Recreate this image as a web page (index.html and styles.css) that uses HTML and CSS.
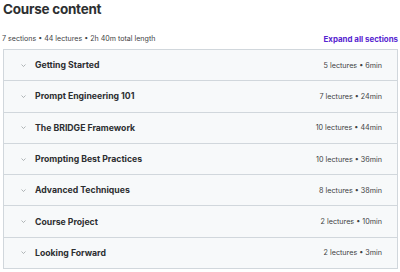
FILE: index.html
```html
<!DOCTYPE html>
<html lang="en">
<head>
    <meta charset="UTF-8">
    <title>Course content</title>
    <link rel="stylesheet" href="styles.css">
</head>
<body>
    <div class="curriculum">
        <h2 class="title">Course content</h2>
        <div class="summary">
            <span>7 sections • 44 lectures • 2h 40m total length</span>
            <a href="#" class="expand-all">Expand all sections</a>
        </div>
        <div class="sections">
            <div class="section">
                <svg class="chevron" viewBox="0 0 10 6"><path d="M1 1l4 4 4-4"/></svg>
                <span class="name">Getting Started</span>
                <span class="meta">5 lectures • 6min</span>
            </div>
            <div class="section">
                <svg class="chevron" viewBox="0 0 10 6"><path d="M1 1l4 4 4-4"/></svg>
                <span class="name">Prompt Engineering 101</span>
                <span class="meta">7 lectures • 24min</span>
            </div>
            <div class="section">
                <svg class="chevron" viewBox="0 0 10 6"><path d="M1 1l4 4 4-4"/></svg>
                <span class="name">The BRIDGE Framework</span>
                <span class="meta">10 lectures • 44min</span>
            </div>
            <div class="section">
                <svg class="chevron" viewBox="0 0 10 6"><path d="M1 1l4 4 4-4"/></svg>
                <span class="name">Prompting Best Practices</span>
                <span class="meta">10 lectures • 36min</span>
            </div>
            <div class="section">
                <svg class="chevron" viewBox="0 0 10 6"><path d="M1 1l4 4 4-4"/></svg>
                <span class="name">Advanced Techniques</span>
                <span class="meta">8 lectures • 38min</span>
            </div>
            <div class="section">
                <svg class="chevron" viewBox="0 0 10 6"><path d="M1 1l4 4 4-4"/></svg>
                <span class="name">Course Project</span>
                <span class="meta">2 lectures • 10min</span>
            </div>
            <div class="section">
                <svg class="chevron" viewBox="0 0 10 6"><path d="M1 1l4 4 4-4"/></svg>
                <span class="name">Looking Forward</span>
                <span class="meta">2 lectures • 3min</span>
            </div>
        </div>
    </div>
</body>
</html>
```

FILE: styles.css
```css
body {
    margin: 0;
    font-family: Inter, "Noto Sans", Arial, sans-serif;
    background-color: white;
    color: #2d2f31;
}
.curriculum {
    padding: 0 2px 0 3px;
}
.title {
    margin: 0;
    font-size: 13.5px;
    font-weight: 700;
    line-height: 18px;
    letter-spacing: -0.25px;
}
.summary {
    display: flex;
    justify-content: space-between;
    align-items: center;
    margin-top: 10px;
    height: 21px;
    font-size: 7.1px;
    margin-left: -1px;
    color: #3e4143;
}
.expand-all {
    color: #5624d0;
    font-weight: 700;
    font-size: 7.9px;
    text-decoration: none;
}
.sections {
    border: 1px solid #d1d7dc;
}
.section {
    display: flex;
    align-items: center;
    height: 30.3px;
    padding: 0 15px 0 17px;
    background-color: #f7f9fa;
    border-top: 1px solid #d1d7dc;
}
.section:first-child {
    border-top: none;
    height: 30.3px;
}
.chevron {
    width: 5px;
    height: 3px;
    fill: none;
    stroke: #8a8f93;
    stroke-width: 1.3;
    margin-right: 9px;
}
.name {
    flex: 1;
    font-size: 8.7px;
    font-weight: 700;
}
.meta {
    font-size: 7.2px;
    color: #3e4143;
}
```
